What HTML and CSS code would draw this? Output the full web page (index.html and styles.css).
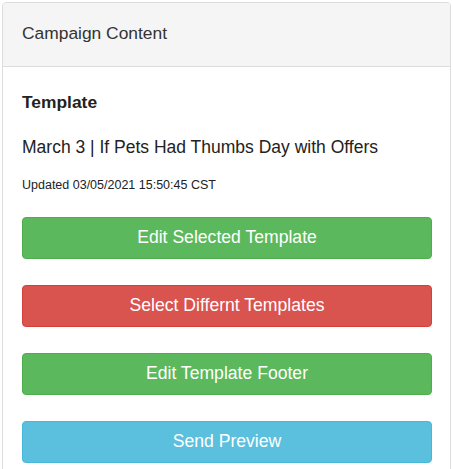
FILE: index.html
```html
<!DOCTYPE html>
<html>
<head>
<meta charset="utf-8">
<link rel="stylesheet" href="styles.css">
</head>
<body>
<div class="panel">
  <div class="panel-heading">Campaign Content</div>
  <div class="panel-body">
    <div class="label">Template</div>
    <div class="template-name">March 3 | If Pets Had Thumbs Day with Offers</div>
    <div class="updated">Updated 03/05/2021 15:50:45 CST</div>
    <div class="actions">
      <button class="btn btn-success">Edit Selected Template</button>
      <button class="btn btn-danger">Select Differnt Templates</button>
      <button class="btn btn-success">Edit Template Footer</button>
      <button class="btn btn-info">Send Preview</button>
    </div>
  </div>
</div>
</body>
</html>
```
FILE: styles.css
```css
html, body {
  margin: 0;
  padding: 0;
  background: #fff;
}
body {
  padding: 2px 2px 0 2px;
  font-family: "Liberation Sans", Arial, sans-serif;
  color: #333;
}
.panel {
  border: 1px solid #ddd;
  border-radius: 4px;
  background: #fff;
  overflow: hidden;
  height: 480px;
}
.panel-heading {
  background: #f5f5f5;
  border-bottom: 1px solid #ddd;
  padding: 19px 19px 21px 19px;
  font-size: 17.4px;
  line-height: 23px;
  color: #333;
}
.panel-body {
  padding: 24px 18px 0 19px;
}
.label {
  font-weight: bold;
  font-size: 17.4px;
  line-height: 22px;
  color: #222;
}
.template-name {
  margin-top: 22px;
  font-size: 17.5px;
  line-height: 24px;
  color: #222;
}
.updated {
  margin-top: 18px;
  font-size: 12.5px;
  line-height: 16px;
  color: #222;
}
.actions {
  margin-top: 24px;
  display: flex;
  flex-direction: column;
  gap: 26px;
}
.btn {
  display: block;
  width: 100%;
  height: 42px;
  border: 1px solid transparent;
  border-radius: 4px;
  font-family: "Liberation Sans", Arial, sans-serif;
  font-size: 17.6px;
  line-height: 24px;
  color: #fff;
  padding: 7px 16px 9px 16px;
  text-align: center;
}
.btn-success {
  background: #5cb85c;
  border-color: #4cae4c;
}
.btn-danger {
  background: #d9534f;
  border-color: #d43f3a;
}
.btn-info {
  background: #5bc0de;
  border-color: #46b8da;
}
```
